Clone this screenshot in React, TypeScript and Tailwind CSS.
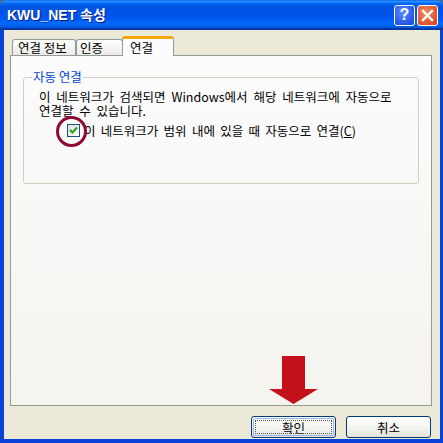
const font = { fontFamily: '"Noto Sans CJK KR", "Liberation Sans", sans-serif' };

const Tab = ({ label, active, w }: { label: string; active?: boolean; w: string }) =>
  active ? (
    <div className={`relative -mb-px -ml-px z-10 h-[20px] pl-[7px] flex items-center border border-b-0 border-[#919b9c] border-t-[3px] border-t-[#f7a70c] rounded-t-[3px] bg-[#fcfcfe] text-[12.5px] leading-[13px] text-black ${w}`}>
      {label}
    </div>
  ) : (
    <div className={`h-[16px] mt-[3px] flex items-center border border-b-0 border-[#919b9c] rounded-t-[3px] bg-[linear-gradient(#ffffff,#ecebe6)] text-[12.5px] leading-[13px] text-black ${w}`}>
      {label}
    </div>
  );

const Button = ({ label, primary }: { label: string; primary?: boolean }) => (
  <button className="w-[85px] h-[22px] rounded-[3px] border border-[#003c74] bg-[linear-gradient(#ffffff,#f3f3ef_60%,#e3e2da)] p-px">
    <div
      className={
        primary
          ? "h-full rounded-[2px] border border-[#9cb4e8] flex items-center justify-center text-[12.5px] leading-[13px] text-black outline-1 outline-dotted outline-[#555] -outline-offset-3"
          : "h-full flex items-center justify-center text-[12.5px] leading-[13px] text-black"
      }
    >
      {label}
    </div>
  </button>
);

export default function App() {
  return (
    <div className="relative w-[443px] h-[443px] flex flex-col bg-[#3a6ea5]" style={font}>
      {/* title bar */}
      <div className="h-[30px] flex items-center rounded-t-[7px] bg-[linear-gradient(#0058ee_0%,#3593ff_4%,#288eff_6%,#127dff_8%,#036ffc_10%,#0262ee_14%,#0057e5_20%,#0054e3_24%,#0055eb_56%,#005bf5_66%,#026afe_76%,#0062ef_86%,#0052d6_92%,#0040ab_94%,#003092_100%)] pl-[7px] pr-[5px]">
        <span
          className="flex-1 text-white font-bold text-[14px] [text-shadow:1px_1px_#0a1883]"
          style={{ fontFamily: '"Liberation Sans", "Noto Sans CJK KR", sans-serif' }}
        >
          KWU_NET 속성
        </span>
        <div className="flex gap-[2px]">
          <div className="w-[21px] h-[21px] rounded-[3px] border border-white bg-[radial-gradient(circle_at_40%_35%,#5a8cff,#2457e8_70%,#1a47c9)] flex items-center justify-center text-white font-bold text-[16px] leading-none" style={{ fontFamily: '"Liberation Sans", sans-serif' }}>
            ?
          </div>
          <div className="w-[21px] h-[21px] rounded-[3px] border border-white bg-[radial-gradient(circle_at_40%_35%,#f08a67,#e0512b_70%,#c4391a)] flex items-center justify-center">
            <svg width="13" height="13" viewBox="0 0 13 13">
              <path d="M2 2 L11 11 M11 2 L2 11" stroke="white" strokeWidth="2.4" strokeLinecap="square" />
            </svg>
          </div>
        </div>
      </div>

      {/* body */}
      <div className="flex-1 flex flex-col bg-[#ece9d8] border-l-4 border-r-3 border-b-4 border-[#0842d8] pt-[5px] pl-[6px] pr-[8px]">
        <div className="flex items-end pl-[2px] h-[20px]">
          <Tab label="연결 정보" w="w-[64px] pl-[5px]" />
          <Tab label="인증" w="w-[47px] pl-[3px]" />
          <Tab label="연결" active w="w-[52px]" />
        </div>
        <div className="h-[351px] border border-[#919b9c] bg-[linear-gradient(#fcfcfe,#f4f3ee)] pt-[14px] px-[12px]">
          <fieldset className="h-[114px] border border-[#d0d0bf] rounded-[3px] pl-[15px] pr-[6px]">
            <legend className="ml-[-7px] px-[1px] text-[12.5px] leading-[14px] text-[#0046d5]">자동 연결</legend>
            <p className="pt-[6px] text-[12.5px] leading-[14px] text-black [word-spacing:3px]">
              이 네트워크가 검색되면 Windows에서 해당 네트워크에 자동으로
              <br />
              연결할 수 있습니다.
            </p>
            <div className="mt-[6px] ml-[28px] flex items-center gap-[4px]">
              <div className="relative w-[13px] h-[13px] border border-[#1c5180] bg-[linear-gradient(135deg,#dcdcd7,#ffffff)] flex items-center justify-center">
                <svg width="9" height="9" viewBox="0 0 9 9">
                  <path d="M1 4 L3.5 6.5 L8 1.5" fill="none" stroke="#21a121" strokeWidth="2" />
                </svg>
                <div className="absolute left-[-12px] top-[-9px] w-[31px] h-[31px] rounded-full border-[3px] border-[#8e0a33]" />
              </div>
              <span className="text-[12.5px] leading-[13px] text-black [word-spacing:2.5px]">
                이 네트워크가 범위 내에 있을 때 자동으로 연결(<span className="underline">C</span>)
              </span>
            </div>
          </fieldset>
        </div>
        <div className="mt-[10px] flex justify-end gap-[10px] pr-[1px]">
          <Button label="확인" primary />
          <Button label="취소" />
        </div>
      </div>

      {/* red arrow pointer */}
      <svg className="absolute left-[269px] top-[356px]" width="49" height="48" viewBox="0 0 49 48">
        <path d="M13 0 H36 V33 H49 L24.5 48 L0 33 H13 Z" fill="#c4101a" />
      </svg>
    </div>
  );
}
